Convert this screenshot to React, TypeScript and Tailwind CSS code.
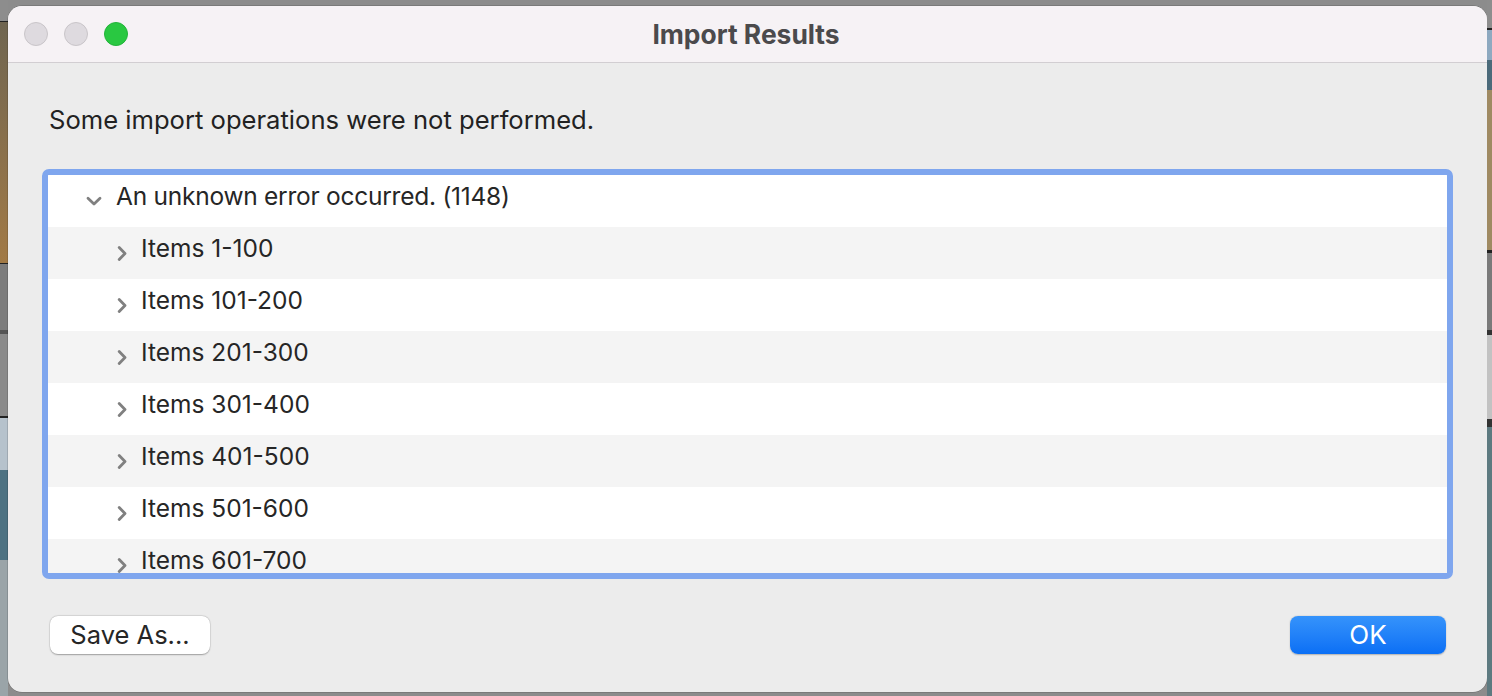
import React from "react";

const font = { fontFamily: "Inter, 'Noto Sans', sans-serif" };

function ChevronRight() {
  return (
    <svg width="12" height="16" viewBox="0 0 12 16" className="shrink-0">
      <path d="M3.2 2.5 L9 8.5 L3.2 14.5" fill="none" stroke="#808080" strokeWidth="2.8" strokeLinecap="round" strokeLinejoin="round" />
    </svg>
  );
}

function ChevronDown() {
  return (
    <svg width="16" height="12" viewBox="0 0 16 12" className="shrink-0">
      <path d="M2 3.2 L8 9 L14 3.2" fill="none" stroke="#808080" strokeWidth="2.8" strokeLinecap="round" strokeLinejoin="round" />
    </svg>
  );
}

const items = [
  "Items 1-100",
  "Items 101-200",
  "Items 201-300",
  "Items 301-400",
  "Items 401-500",
  "Items 501-600",
  "Items 601-700",
  "Items 701-800",
];

export default function App() {
  return (
    <div className="flex h-[696px] w-[1492px] overflow-hidden bg-[#8c8c8c]" style={font}>
      <div className="flex w-[8px] shrink-0 flex-col">
        <div className="h-[21px] bg-[#8d8d8d]" />
        <div className="h-[1px] bg-[#222]" />
        <div className="h-[241px] bg-gradient-to-b from-[#6f6550] to-[#a27a45]" />
        <div className="h-[1px] bg-[#222]" />
        <div className="h-[66px] bg-[#7c7c7c]" />
        <div className="h-[4px] bg-[#555]" />
        <div className="h-[82px] bg-[#8a8a8a]" />
        <div className="h-[2px] bg-[#222]" />
        <div className="h-[52px] bg-[#b6c2cc]" />
        <div className="h-[90px] bg-[#4d7282]" />
        <div className="flex-1 bg-[#9aa4a8]" />
      </div>
      <div className="flex min-w-0 flex-1 flex-col pt-[6px] pb-[4px]">
        <div className="flex h-full flex-col overflow-hidden rounded-[14px] bg-[#ececec] shadow-[0_0_0_0.5px_rgba(0,0,0,0.25)]">
          <div className="grid h-[57px] shrink-0 grid-cols-[1fr_auto_1fr] items-center border-b border-[#d2ced2] bg-[#f6f2f5]">
            <div className="flex items-center gap-[16px] pl-[16px]">
              <div className="h-[24px] w-[24px] rounded-full border border-[#c9c5c9] bg-[#dedadf]" />
              <div className="h-[24px] w-[24px] rounded-full border border-[#c9c5c9] bg-[#dedadf]" />
              <div className="h-[24px] w-[24px] rounded-full border border-[#22b33a] bg-[#29c841]" />
            </div>
            <div className="-ml-[3px] text-[26.4px] font-bold leading-[32px] text-[#4b4a4c]">Import Results</div>
            <div />
          </div>
          <div className="flex flex-1 flex-col px-[34px]">
            <div className="mt-[41px] pl-[7px] text-[25.6px] leading-[32px] text-[#222]">
              Some import operations were not performed.
            </div>
            <div className="mt-[33px] h-[410px] overflow-hidden rounded-[7px] border-[6px] border-[#7fa6ee] bg-white">
              <div className="flex h-[52px] items-center bg-white pl-[38px]">
                <ChevronDown />
                <span className="mb-[10px] ml-[14px] text-[24.5px] leading-[32px] tracking-[-0.25px] text-[#262626]">
                  An unknown error occurred. (1148)
                </span>
              </div>
              {items.map((t, i) => (
                <div
                  key={t}
                  className={`flex h-[52px] items-center pl-[68px] ${i % 2 === 0 ? "bg-[#f4f4f4]" : "bg-white"}`}
                >
                  <ChevronRight />
                  <span className="mb-[10px] ml-[13px] text-[24.5px] leading-[32px] text-[#262626]">{t}</span>
                </div>
              ))}
            </div>
            <div className="mt-[37px] flex items-center justify-between pl-[8px] pr-[7px]">
              <button className="flex h-[38px] w-[160px] items-center justify-center rounded-[8px] bg-white text-[25.5px] leading-none text-[#262626] shadow-[0_0.5px_1.5px_rgba(0,0,0,0.3),0_0_0_0.5px_rgba(0,0,0,0.08)]">
                Save As...
              </button>
              <button className="flex h-[38px] w-[156px] items-center justify-center rounded-[8px] bg-gradient-to-b from-[#3593fb] to-[#0a6ff5] text-[26px] leading-none text-white shadow-[0_0.5px_1.5px_rgba(0,0,0,0.25)]">
                OK
              </button>
            </div>
          </div>
        </div>
      </div>
      <div className="flex w-[5px] shrink-0 flex-col">
        <div className="h-[28px] bg-[#8d8d8d]" />
        <div className="h-[2px] bg-[#222]" />
        <div className="h-[30px] bg-[#8ea9c0]" />
        <div className="h-[30px] bg-[#4b6a7a]" />
        <div className="h-[160px] bg-[#9f8a62]" />
        <div className="h-[3px] bg-[#222]" />
        <div className="h-[77px] bg-[#7a7a7a]" />
        <div className="h-[5px] bg-[#333]" />
        <div className="h-[84px] bg-[#c2c2c2]" />
        <div className="h-[8px] bg-[#333]" />
        <div className="flex-1 bg-[#5d7a80]" />
      </div>
    </div>
  );
}
